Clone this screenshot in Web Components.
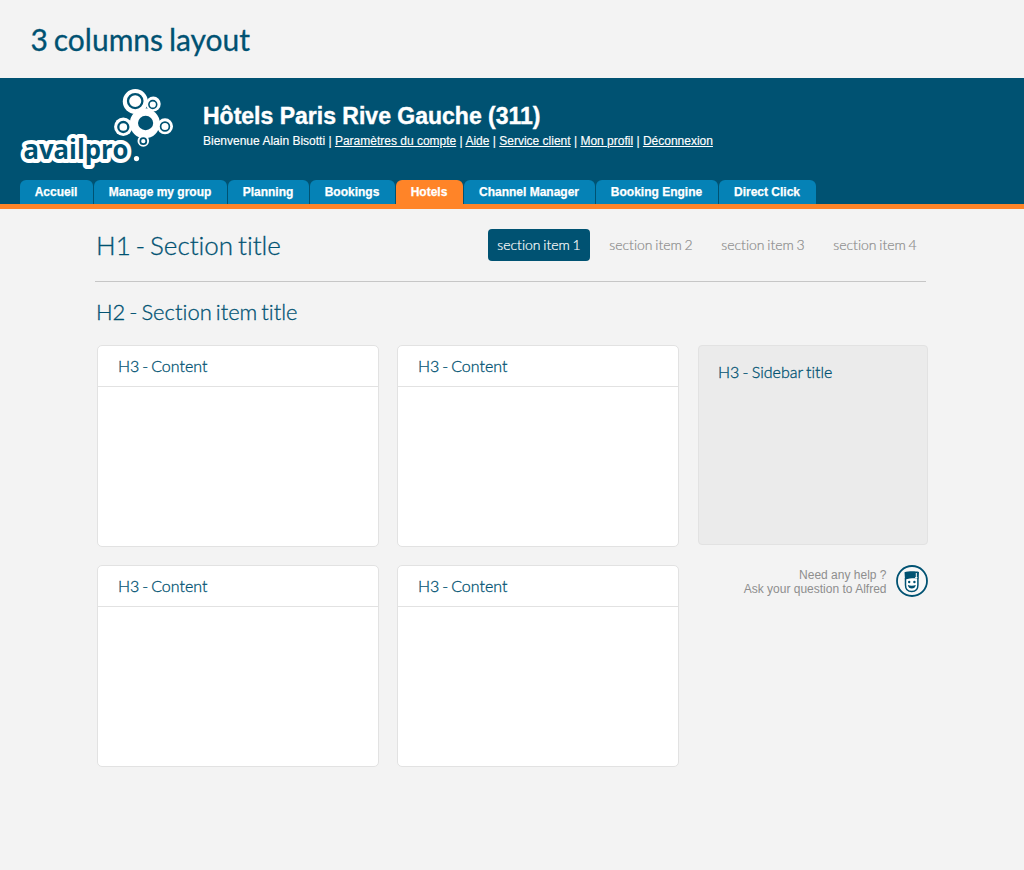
<!DOCTYPE html>
<html lang="en">
<head>
<meta charset="utf-8">
<title>3 columns layout</title>
<style>
body{margin:0;background:#f3f3f3;font-family:Lato,sans-serif;color:#005272;font-variant-ligatures:none}
</style>
</head>
<body>
<layout-page></layout-page>
<script>
function define(name, markup){
  customElements.define(name, class extends HTMLElement{
    constructor(){
      super();
      const t=document.createElement('template');
      t.innerHTML=markup;
      this.attachShadow({mode:'open'}).append(t.content.cloneNode(true));
    }
  });
}

define('avail-logo', `
<style>:host{display:block;width:160px;height:92px}svg{display:block}</style>
<svg width="160" height="92" viewBox="16 84 160 92">
  <g fill="#fff">
    <circle cx="135.3" cy="101.5" r="12.5"/><circle cx="153.3" cy="104" r="7.4"/>
    <circle cx="144.8" cy="123.3" r="15"/><circle cx="123.3" cy="126.7" r="9.2"/>
    <circle cx="165" cy="126.3" r="8"/><circle cx="143.3" cy="141" r="5.8"/>
    <circle cx="136.5" cy="158.6" r="2.6"/>
  </g>
  <g fill="#fff" stroke="#005272" stroke-width="2.3">
    <ellipse cx="135.2" cy="101.1" rx="7.2" ry="7"/><circle cx="152.8" cy="104.5" r="3.9" stroke-width="1.6"/>
    <circle cx="123.3" cy="127" r="5"/><circle cx="165" cy="126.5" r="4.4" stroke-width="1.7"/>
    <circle cx="143.3" cy="141.2" r="3" stroke-width="1.7"/>
  </g>
  <ellipse cx="145.6" cy="123" rx="7.6" ry="7.2" fill="#005272"/>
  <text x="23.500" y="159" textLength="105" lengthAdjust="spacingAndGlyphs" font-family="Open Sans, sans-serif" font-weight="700" font-size="26" fill="#005272" stroke="#fff" stroke-width="8" stroke-linejoin="round" paint-order="stroke">availpro</text>
</svg>`);

define('nav-tab', `
<style>
:host{display:block;box-sizing:border-box;height:24px;border-radius:6px 6px 0 0;background:#0582b6;color:#fff;text-align:center;font:bold 12px/24px "Liberation Sans",Arial,sans-serif;-webkit-text-stroke:.25px;white-space:nowrap;padding-right:1px}
:host([active]){background:#ff8428}
</style><slot></slot>`);

define('site-header', `
<style>
:host{display:flex;flex-direction:column;height:126px;background:#005272;border-bottom:5px solid #ff8428;color:#fff;font-family:"Liberation Sans",Arial,sans-serif}
.top{display:flex;height:102px;padding-left:16px}
avail-logo{margin-top:6px}
.who{padding:24px 0 0 27px;white-space:nowrap}
h2{margin:0;font:bold 23px/28px "Liberation Sans",Arial,sans-serif;-webkit-text-stroke:.4px}
p{margin:3px 0 0;font-size:12px;line-height:16px;-webkit-text-stroke:.15px}
a{text-decoration:underline}
nav{display:grid;grid-template-columns:73px 133px 81px 85px 67px 131px 122px 97px;gap:1px;padding-left:20px}
</style>
<div class="top"><avail-logo></avail-logo>
<div class="who"><h2>Hôtels Paris Rive Gauche (311)</h2>
<p>Bienvenue Alain Bisotti | <a>Paramètres du compte</a> | <a>Aide</a> | <a>Service client</a> | <a>Mon profil</a> | <a>Déconnexion</a></p></div></div>
<nav><nav-tab>Accueil</nav-tab><nav-tab>Manage my group</nav-tab><nav-tab>Planning</nav-tab><nav-tab>Bookings</nav-tab><nav-tab active>Hotels</nav-tab><nav-tab>Channel Manager</nav-tab><nav-tab>Booking Engine</nav-tab><nav-tab>Direct Click</nav-tab></nav>`);

define('section-item', `
<style>
:host{display:block;box-sizing:border-box;width:102px;height:32px;border-radius:4px;text-align:center;font-size:14px;line-height:32px;font-weight:300;color:#8c8c8c;word-spacing:-1px;-webkit-text-stroke:.2px;white-space:nowrap}
:host([active]){background:#005272;color:#fff}
</style><slot></slot>`);

define('section-bar', `
<style>
:host{display:flex;box-sizing:border-box;width:831px;height:73px;margin-left:95px;padding:20px 0 0 1px;border-bottom:1px solid #c6c6c6}
h1{margin:0;flex:1;font-weight:300;font-size:26px;line-height:33px;word-spacing:-2.2px;-webkit-text-stroke:.3px}
nav{display:flex;gap:10px}
</style>
<h1>H1 - Section title</h1>
<nav><section-item active>section item 1</section-item><section-item>section item 2</section-item><section-item>section item 3</section-item><section-item>section item 4</section-item></nav>`);

define('content-card', `
<style>
:host{display:block;box-sizing:border-box;height:202px;border:1px solid #e2e2e2;border-radius:5px;background:#fff}
h3{margin:0;padding-left:20px;height:40px;border-bottom:1px solid #e2e2e2;font-size:16px;line-height:40px;font-weight:300;word-spacing:-1.4px;-webkit-text-stroke:.3px}
</style><h3><slot></slot></h3>`);

define('side-panel', `
<style>
:host{display:block;box-sizing:border-box;height:200px;border:1px solid #e2e2e2;border-radius:4px;background:#ebebeb}
h3{margin:0;padding:16px 0 0 19px;font-size:16px;line-height:20px;font-weight:300;word-spacing:-1.1px;-webkit-text-stroke:.3px}
</style><h3><slot></slot></h3>`);

define('alfred-help', `
<style>
:host{display:flex;justify-content:flex-end;align-items:center;gap:9.500px;height:32px;color:#8e8e8e;font:12px/14px "Liberation Sans",Arial,sans-serif;text-align:right}
div{padding-top:2px}
svg{display:block}
</style>
<div>Need any help ?<br>Ask your question to Alfred</div>
<svg width="32" height="32" viewBox="0 0 32 32">
  <circle cx="16" cy="16" r="15" fill="#f7f7f7" stroke="#005272" stroke-width="1.8"/>
  <path d="M9.500 13v7c0 4 2.200 6.500 6.200 6.500s6.200-2.500 6.200-6.500V12.500" fill="#fff" stroke="#005272" stroke-width="1.500"/>
  <path d="M8.500 7.200C12 6.200 19 6 23 7l-.3 6.500C18 12.800 14 13.200 9 14.500Z" fill="#005272"/>
  <path d="M20.300 8v5M19.200 12.500h2.200" stroke="#fff" stroke-width="1"/>
  <circle cx="13.200" cy="17" r="1.200" fill="#005272"/><circle cx="18.400" cy="17" r="1.200" fill="#005272"/>
  <path d="M11.800 20q4 1.500 8 0q-.7 3.500-4 3.500T11.800 20Z" fill="#005272"/>
</svg>`);

define('layout-page', `
<style>
:host{display:block;height:870px;overflow:hidden}
.title{height:78px;padding-left:30.500px;font-size:30px;line-height:79px;word-spacing:-1.800px;-webkit-text-stroke:.3px}
.sub{margin:0;padding:14px 0 0 96px;height:49px;font-size:22px;line-height:31px;font-weight:300;word-spacing:-2px;-webkit-text-stroke:.3px}
main{display:grid;grid-template-columns:282px 282px 230px;column-gap:18px;row-gap:18px;margin-left:97px}
side-panel,alfred-help{margin-left:1px;width:230px}
</style>
<div class="title">3 columns layout</div>
<site-header></site-header>
<section-bar></section-bar>
<h2 class="sub">H2 - Section item title</h2>
<main>
<content-card>H3 - Content</content-card><content-card>H3 - Content</content-card><side-panel>H3 - Sidebar title</side-panel>
<content-card>H3 - Content</content-card><content-card>H3 - Content</content-card><alfred-help></alfred-help>
</main>`);
</script>
</body>
</html>
